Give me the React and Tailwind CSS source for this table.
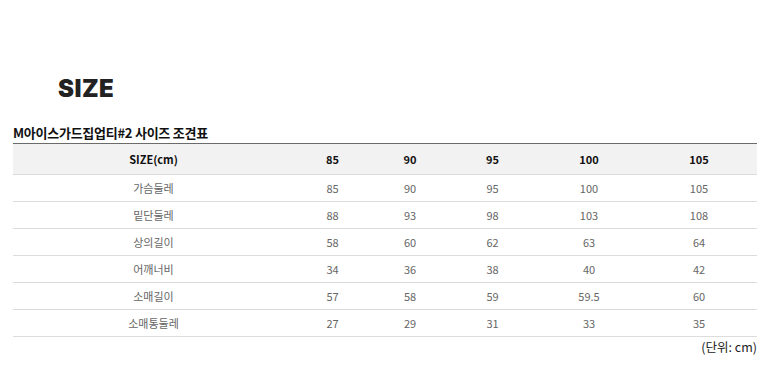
import React from 'react';

const KR = { fontFamily: '"Noto Sans CJK KR", "Noto Sans", sans-serif' };

const COLS = ['85', '90', '95', '100', '105'];

const ROWS = [
  ['가슴둘레', '85', '90', '95', '100', '105'],
  ['밑단둘레', '88', '93', '98', '103', '108'],
  ['상의길이', '58', '60', '62', '63', '64'],
  ['어깨너비', '34', '36', '38', '40', '42'],
  ['소매길이', '57', '58', '59', '59.5', '60'],
  ['소매통둘레', '27', '29', '31', '33', '35'],
];

const grid = 'grid grid-cols-[281px_77px_78px_87px_106px_114px]';

export default function App() {
  return (
    <div className="w-[770px] h-[387px] bg-white overflow-hidden" style={KR}>
      <div className="pt-[74px] pl-[58px]">
        <h1 className="text-[24px] leading-[30px] font-black tracking-[0.02em] text-[#222]" style={{ fontFamily: 'Inter, sans-serif' }}>
          SIZE
        </h1>
      </div>
      <div className="px-[13px] mt-[20px]">
        <h2 className="text-[13px] leading-[17px] font-bold text-[#111] tracking-[-0.02em]">M아이스가드집업티#2 사이즈 조견표</h2>
        <div className="mt-[2px] border-t-[1.5px] border-[#6b6b6b]">
          <div className={`${grid} h-[31px] items-center bg-[#f3f2f2] border-b-[1.5px] border-[#dcdcdc] text-[11px] font-bold text-[#111]`}>
            <div className="text-center">SIZE(cm)</div>
            {COLS.map((c) => (
              <div key={c} className="text-center">{c}</div>
            ))}
          </div>
          {ROWS.map((row) => (
            <div key={row[0]} className={`${grid} h-[27px] items-center border-b-[1.5px] border-[#dcdcdc] text-[11px] text-[#666]`}>
              {row.map((cell, i) => (
                <div key={i} className="text-center">{cell}</div>
              ))}
            </div>
          ))}
        </div>
        <p className="text-right text-[12.5px] leading-[20px] text-[#222]">(단위: cm)</p>
      </div>
    </div>
  );
}
